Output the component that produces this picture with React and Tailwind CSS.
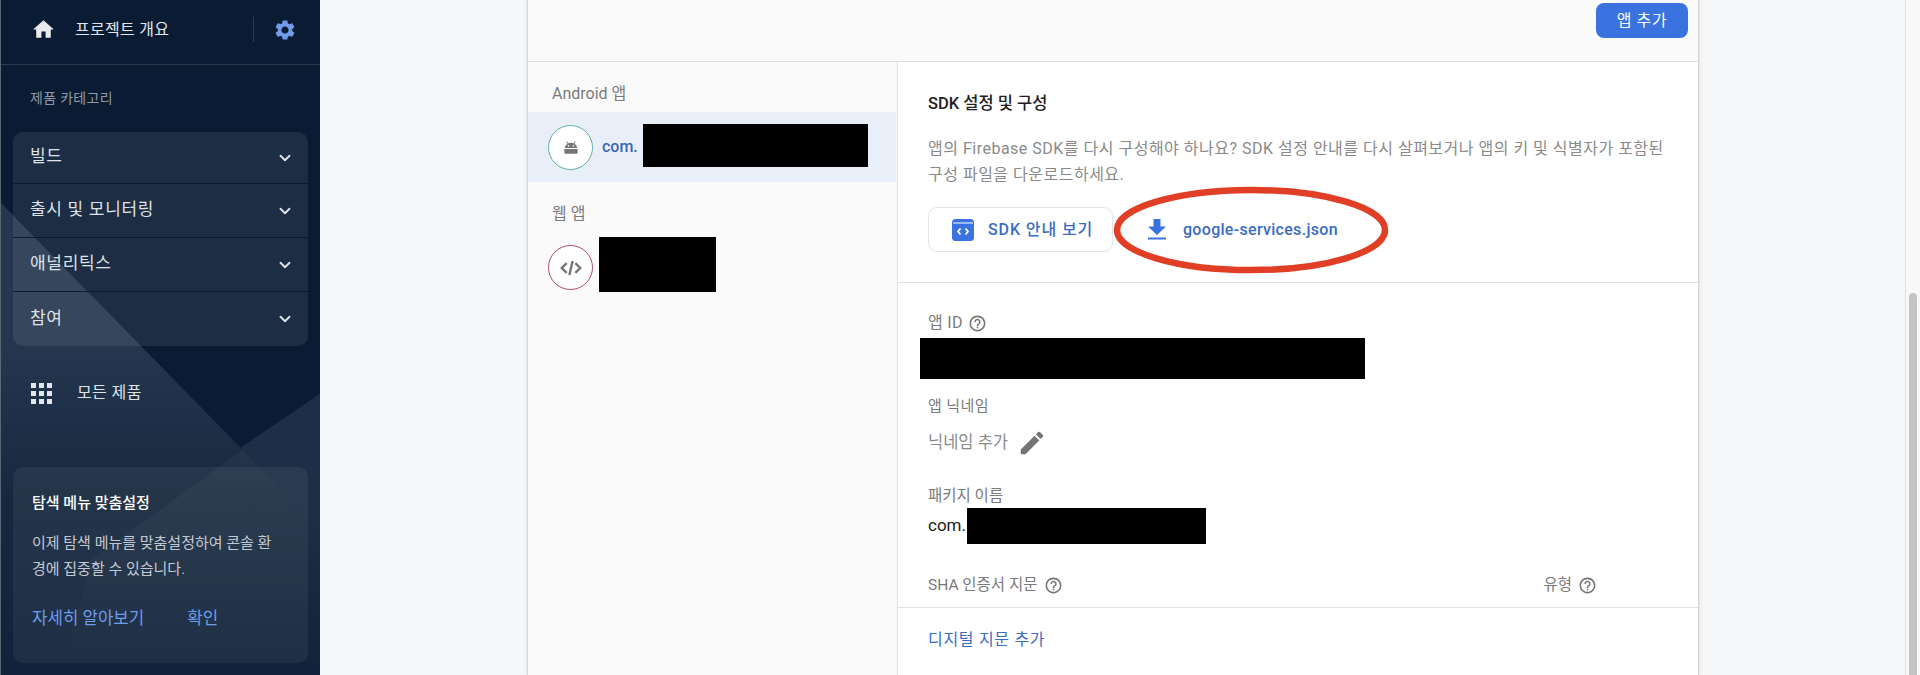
import React from 'react';
import { ChevronDown } from 'lucide-react';

const NAV_GROUPS = ['빌드', '출시 및 모니터링', '애널리틱스', '참여'];

const FONT = 'font-[Roboto,"Noto_Sans_CJK_KR",sans-serif]';

const Help = ({ className = '' }) => (
    <svg viewBox="0 0 24 24" className={`w-[19px] h-[19px] fill-[#757575] shrink-0 ${className}`}>
        <path d="M11 18h2v-2h-2v2zm1-16C6.48 2 2 6.48 2 12s4.48 10 10 10 10-4.48 10-10S17.52 2 12 2zm0 18c-4.41 0-8-3.59-8-8s3.59-8 8-8 8 3.59 8 8-3.59 8-8 8zm0-14c-2.21 0-4 1.79-4 4h2c0-1.1.9-2 2-2s2 .9 2 2c0 2-3 1.75-3 5h2c0-2.25 3-2.5 3-5 0-2.21-1.79-4-4-4z" />
    </svg>
);

const Sidebar = () => (
    <aside className="relative w-[320px] h-full shrink-0 bg-[#0a1c33] border-l border-[#5c6672] overflow-hidden">
        {/* backdrop shapes */}
        <svg viewBox="0 0 320 675" className="absolute inset-0 w-[320px] h-[675px]">
            <defs>
                <linearGradient id="fade" x1="0" y1="0" x2="0" y2="1">
                    <stop offset="0.3" stopColor="#25374f" />
                    <stop offset="0.62" stopColor="#17293f" />
                    <stop offset="1" stopColor="#10233a" />
                </linearGradient>
                <linearGradient id="band" x1="0" y1="0" x2="0" y2="1">
                    <stop offset="0" stopColor="#ffffff" stopOpacity="0.05" />
                    <stop offset="1" stopColor="#ffffff" stopOpacity="0" />
                </linearGradient>
            </defs>
            <polygon points="0,203 320,530 320,675 0,675" fill="url(#fade)" />
            <polygon points="320,393 90,560 60,675 320,675" fill="url(#band)" />
            <polygon points="239,448 320,393 320,530" fill="#1d2f47" />
        </svg>

        <div className="relative flex flex-col h-full">
            <div className="h-[65px] flex items-center border-b border-[#2c3b50] pl-[31px] pr-[23px] shrink-0 pb-[5px]">
                <svg viewBox="0 0 24 24" className="w-[25px] h-[25px] fill-[#e8eaed] shrink-0 -ml-[1px]">
                    <path d="M10 20v-6h4v6h5v-8h3L12 3 2 12h3v8z" />
                </svg>
                <span className="ml-[19px] mt-[1px] text-[16px] tracking-[0.3px] leading-none text-[#e3e6ea]">프로젝트 개요</span>
                <div className="ml-auto w-px h-[25px] bg-[#2c3b50] mr-[19px]" />
                <svg viewBox="0 0 24 24" className="w-[24px] h-[24px] fill-[#6f9bea] shrink-0">
                    <path d="M19.14 12.94c.04-.3.06-.61.06-.94 0-.32-.02-.64-.07-.94l2.03-1.58c.18-.14.23-.41.12-.61l-1.92-3.32c-.12-.22-.37-.29-.59-.22l-2.39.96c-.5-.38-1.03-.7-1.62-.94l-.36-2.54c-.04-.24-.24-.41-.48-.41h-3.84c-.24 0-.43.17-.47.41l-.36 2.54c-.59.24-1.13.57-1.62.94l-2.39-.96c-.22-.08-.47 0-.59.22L2.74 8.87c-.12.21-.08.47.12.61l2.03 1.58c-.05.3-.09.63-.09.94s.02.64.07.94l-2.03 1.58c-.18.14-.23.41-.12.61l1.92 3.32c.12.22.37.29.59.22l2.39-.96c.5.38 1.03.7 1.62.94l.36 2.54c.05.24.24.41.48.41h3.84c.24 0 .44-.17.47-.41l.36-2.54c.59-.24 1.13-.56 1.62-.94l2.39.96c.22.08.47 0 .59-.22l1.92-3.32c.12-.22.07-.47-.12-.61l-2.01-1.58zM12 15.6c-1.98 0-3.6-1.62-3.6-3.6s1.62-3.6 3.6-3.6 3.6 1.62 3.6 3.6-1.62 3.6-3.6 3.6z" />
                </svg>
            </div>

            <div className="pl-[29px] mt-[25px] text-[14px] tracking-[0.3px] leading-[16px] text-[#8f99a6]">제품 카테고리</div>

            <div className="mx-[12px] mt-[26px] rounded-[10px] bg-white/[0.08] divide-y divide-[#0c1b2f] shrink-0">
                {NAV_GROUPS.map((label) => (
                    <div key={label} className="h-[54px] first:h-[52px] flex items-center justify-between pl-[17px] pr-[14px] text-[17px] tracking-[0.7px] text-[#dfe3e8]">
                        <span className="-mt-[1px]">{label}</span>
                        <ChevronDown className="w-[18px] h-[18px] text-[#dfe3e8]" strokeWidth={2.5} />
                    </div>
                ))}
            </div>

            <div className="flex items-center pl-[30px] mt-[35px] h-[24px]">
                <svg viewBox="0 0 21 21" className="w-[21px] h-[21px] fill-[#e3e6ea]">
                    <path d="M0 0h5v5H0zM8 0h5v5H8zM16 0h5v5h-5zM0 8h5v5H0zM8 8h5v5H8zM16 8h5v5h-5zM0 16h5v5H0zM8 16h5v5H8zM16 16h5v5h-5z" />
                </svg>
                <span className="ml-[25px] text-[16px] tracking-[0.4px] text-[#dfe3e8]">모든 제품</span>
            </div>

            <div className="mx-[12px] mt-[62px] h-[196px] rounded-[10px] bg-white/[0.06] px-[19px] pt-[25px] shrink-0">
                <div className="text-[15px] leading-[22px] font-medium text-white">탐색 메뉴 맞춤설정</div>
                <p className="mt-[16px] text-[15px] leading-[26px] text-[#c3c9d1] break-all">이제 탐색 메뉴를 맞춤설정하여 콘솔 환<br />경에 집중할 수 있습니다.</p>
                <div className="mt-[24px] flex gap-[43px] text-[16.8px] leading-[24px] text-[#6f9bea]">
                    <span>자세히 알아보기</span>
                    <span>확인</span>
                </div>
            </div>
        </div>
    </aside>
);

const AppRow = ({ ringClass, active, children, icon }) => (
    <div className={`flex items-center pl-[20px] ${active ? 'h-[70px] bg-[#e8eff9] mr-px' : 'h-[55px]'}`}>
        <div className={`w-[45px] h-[45px] rounded-full border bg-white flex items-center justify-center shrink-0 ${ringClass}`}>
            {icon}
        </div>
        {children}
    </div>
);

const AppList = () => (
    <div className="w-[370px] shrink-0 bg-[#fafafa] border-r border-[#e0e0e0]">
        <div className="h-[50px] pl-[24px] pt-[22px] text-[16px] leading-[20px] text-[#7a7a7a]">Android 앱</div>
        <AppRow
            active
            ringClass="border-[#5fb0a8]"
            icon={
                <svg viewBox="0 0 24 24" className="w-[20px] h-[20px] fill-[#757575]">
                    <path fillRule="evenodd" d="M4 14.5h16V19a1 1 0 0 1-1 1H5a1 1 0 0 1-1-1zM4.4 13.2a7.6 7.6 0 0 1 3.4-5.2L6.4 5.5l.8-.5 1.6 2.5a7.6 7.6 0 0 1 6.4 0L16.8 5l.8.5L16.2 8a7.6 7.6 0 0 1 3.4 5.2zM9 9.6a1 1 0 1 0 0 2 1 1 0 0 0 0-2zm6 0a1 1 0 1 0 0 2 1 1 0 0 0 0-2z" />
                </svg>
            }
        >
            <span className="ml-[9px] w-[39px] overflow-hidden text-[16px] font-medium text-[#3a66b8] -mt-[1px]">com.</span>
            <div className="w-[225px] h-[43px] bg-black ml-[2px] -mt-[3px]" />
        </AppRow>
        <div className="h-[58px] pl-[24px] pt-[22px] text-[16px] leading-[20px] text-[#7a7a7a]">웹 앱</div>
        <AppRow
            ringClass="border-[#b04a6c]"
            icon={
                <svg viewBox="0 0 24 24" className="w-[26px] h-[26px] fill-none stroke-[#757575] stroke-[2.2]">
                    <path d="M8 7.5 3.5 12 8 16.5M16 7.5l4.5 4.5-4.5 4.5M13.5 5.5l-3 13" />
                </svg>
            }
        >
            <div className="w-[117px] h-[55px] bg-black ml-[6px] -mt-[6px]" />
        </AppRow>
    </div>
);

const Details = () => (
    <div className="relative flex-1 bg-white min-w-0">
        <div className="h-[221px] border-b border-[#e0e0e0] pl-[30px] pr-[30px]">
            <div className="pt-[31px] text-[16.5px] leading-[22px] font-medium text-[#212121]">SDK 설정 및 구성</div>
            <p className="mt-[21px] text-[16px] tracking-[0.5px] leading-[26px] text-[#8a8a8a] whitespace-nowrap">앱의 Firebase SDK를 다시 구성해야 하나요? SDK 설정 안내를 다시 살펴보거나 앱의 키 및 식별자가 포함된<br />구성 파일을 다운로드하세요.</p>
            <div className="mt-[19px] flex items-center">
                <div className="w-[185px] h-[45px] border border-[#e3e5e8] rounded-[9px] flex items-center pl-[22px] bg-white shrink-0">
                    <svg viewBox="0 0 24 24" className="w-[24px] h-[24px] shrink-0">
                        <rect x="1" y="1" width="22" height="22" rx="3.5" fill="#3a72e0" />
                        <path d="M2 5h20" stroke="#ffffff" strokeWidth="1" />
                        <path d="M9.5 10.5 7 13.5l2.5 3M14.5 10.5l2.5 3-2.5 3" fill="none" stroke="#ffffff" strokeWidth="1.8" />
                    </svg>
                    <span className="ml-[13px] text-[16px] tracking-[0.9px] font-medium text-[#3a6cc4] whitespace-nowrap">SDK 안내 보기</span>
                </div>
                <svg viewBox="0 0 20 21" className="ml-[34px] w-[20px] h-[21px] fill-[#3a72e0] shrink-0">
                    <path d="M6.5 0h7v7.5H19L10 16 1 7.5h5.5zM1 18.5h18V20.5H1z" />
                </svg>
                <span className="ml-[16px] text-[16px] font-medium tracking-[0.3px] text-[#3a6cc4] whitespace-nowrap">google-services.json</span>
            </div>
        </div>

        <div className="pl-[30px]">
            <div className="mt-[29px] flex items-center gap-[5px] text-[16px] tracking-[0.3px] leading-[22px] text-[#7a7a7a]">
                <span>앱 ID</span>
                <Help />
            </div>
            <div className="w-[445px] h-[41px] bg-black -ml-[8px] mt-[4px]" />
            <div className="mt-[16px] text-[15px] tracking-[0.4px] leading-[22px] text-[#7a7a7a]">앱 닉네임</div>
            <div className="mt-[11px] flex items-center text-[16.5px] leading-[24px] text-[#8a8a8a]">
                <span>닉네임 추가</span>
                <svg viewBox="0 0 24 24" className="ml-[9px] w-[30px] h-[30px] fill-[#757575]">
                    <path d="M3 17.25V21h3.75L17.81 9.94l-3.75-3.75L3 17.25zM20.71 7.04a1 1 0 0 0 0-1.41l-2.34-2.34a1 1 0 0 0-1.41 0l-1.83 1.83 3.75 3.75 1.83-1.83z" />
                </svg>
            </div>
            <div className="mt-[27px] text-[15.5px] leading-[22px] text-[#7a7a7a]">패키지 이름</div>
            <div className="mt-[1px] flex items-center">
                <span className="text-[17px] text-[#212121]">com.</span>
                <div className="w-[239px] h-[36px] bg-black ml-[1px]" />
            </div>
        </div>

        <div className="mt-[30px] h-[34px] flex items-start pl-[30px] border-b border-[#e0e0e0] text-[15.5px] leading-[22px] text-[#7a7a7a]">
            <span>SHA 인증서 지문</span>
            <Help className="ml-[6px] mt-[2px]" />
            <span className="ml-[481px]">유형</span>
            <Help className="ml-[6px] mt-[2px]" />
        </div>
        <div className="pl-[30px] pt-[20px] text-[16px] tracking-[0.7px] leading-[24px] text-[#3a6cc4]">디지털 지문 추가</div>

        {/* hand-drawn annotation around the download link */}
        <svg viewBox="0 0 280 94" className="absolute left-[213px] top-[121px] w-[280px] h-[94px] pointer-events-none">
            <ellipse cx="140" cy="47" rx="134" ry="40" fill="none" stroke="#e13f25" strokeWidth="6.5" />
        </svg>
    </div>
);

export default function App() {
    return (
        <div className={`w-[1920px] h-[675px] flex overflow-hidden bg-[#f5f6f8] ${FONT}`}>
            <Sidebar />
            <main className="flex-1 min-w-0 pl-[207px]">
                <div className="w-[1172px] h-full border-x border-[#d8d8d8] bg-[#fafafa] shadow-[0_0_3px_rgba(0,0,0,0.15)] flex flex-col">
                    <div className="h-[62px] shrink-0 border-b border-[#e0e0e0] flex items-start justify-end pr-[10px] pt-[3px]">
                        <button className="w-[92px] h-[35px] rounded-[8px] bg-[#3a72e0] text-white text-[16px] tracking-[0.6px]">앱 추가</button>
                    </div>
                    <div className="flex-1 flex min-h-0">
                        <AppList />
                        <Details />
                    </div>
                </div>
            </main>
            <div className="w-[15px] shrink-0 h-full border-l border-[#e4e4e4] bg-[#f8f8f8] flex flex-col justify-end items-center">
                <div className="w-[8px] h-[382px] rounded-t-[4px] bg-[#c4c4c4]" />
            </div>
        </div>
    );
}
